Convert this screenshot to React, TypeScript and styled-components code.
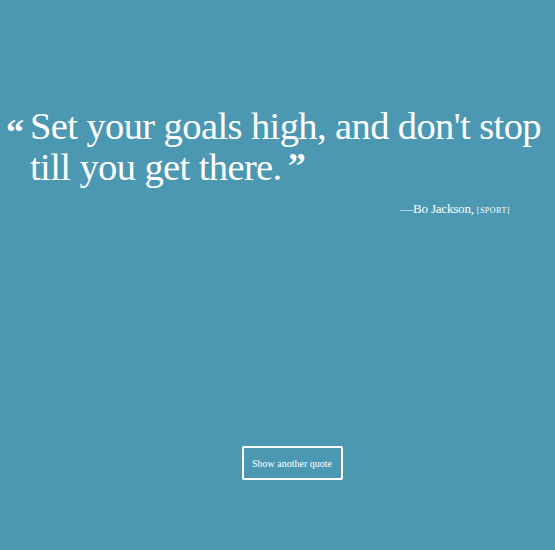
import React from "react";
import styled, { createGlobalStyle } from "styled-components";

const Global = createGlobalStyle`
  html, body { margin: 0; padding: 0; }
  body { background: #4c98b2; font-family: "Liberation Serif", "DejaVu Serif", serif; color: #fff; }
`;

const Page = styled.div`
  width: 555px;
  height: 550px;
  box-sizing: border-box;
  display: flex;
  flex-direction: column;
  padding-top: 106px;
`;

const QuoteBlock = styled.div`
  display: flex;
  align-items: flex-start;
  padding-left: 6px;
`;

const OpenMark = styled.span`
  font-weight: 700;
  font-size: 36px;
  line-height: 1;
  width: 24px;
  flex: none;
  margin-top: 8px;
`;

const QuoteText = styled.p`
  margin: 0;
  font-size: 38.5px;
  line-height: 40px;
  letter-spacing: -0.6px;
  white-space: nowrap;
`;

const CloseMark = styled.span`
  font-weight: 700;
  font-size: 36px;
  vertical-align: 2px;
  margin-left: 6px;
`;

const Author = styled.div`
  align-self: flex-end;
  margin-right: 45px;
  margin-top: 14px;
  font-size: 13px;
  letter-spacing: -0.2px;
`;

const Category = styled.span`
  font-size: 8px;
  letter-spacing: 0.5px;
  margin-left: 3px;
`;

const ButtonRow = styled.div`
  display: flex;
  justify-content: center;
  padding-left: 29px;
  margin-top: 229px;
`;

const Button = styled.button`
  font-family: "Liberation Serif", "DejaVu Serif", serif;
  font-size: 10px;
  color: #fff;
  background: transparent;
  border: 2px solid #fff;
  border-radius: 2px;
  width: 101px;
  height: 34px;
  padding: 0;
  cursor: pointer;
`;

export default function App() {
  return (
    <>
      <Global />
      <Page>
        <QuoteBlock>
          <OpenMark>“</OpenMark>
          <QuoteText>
            Set your goals high, and don't stop
            <br />
            till you get there.<CloseMark>”</CloseMark>
          </QuoteText>
        </QuoteBlock>
        <Author>
          —Bo Jackson,<Category>[SPORT]</Category>
        </Author>
        <ButtonRow>
          <Button>Show another quote</Button>
        </ButtonRow>
      </Page>
    </>
  );
}
